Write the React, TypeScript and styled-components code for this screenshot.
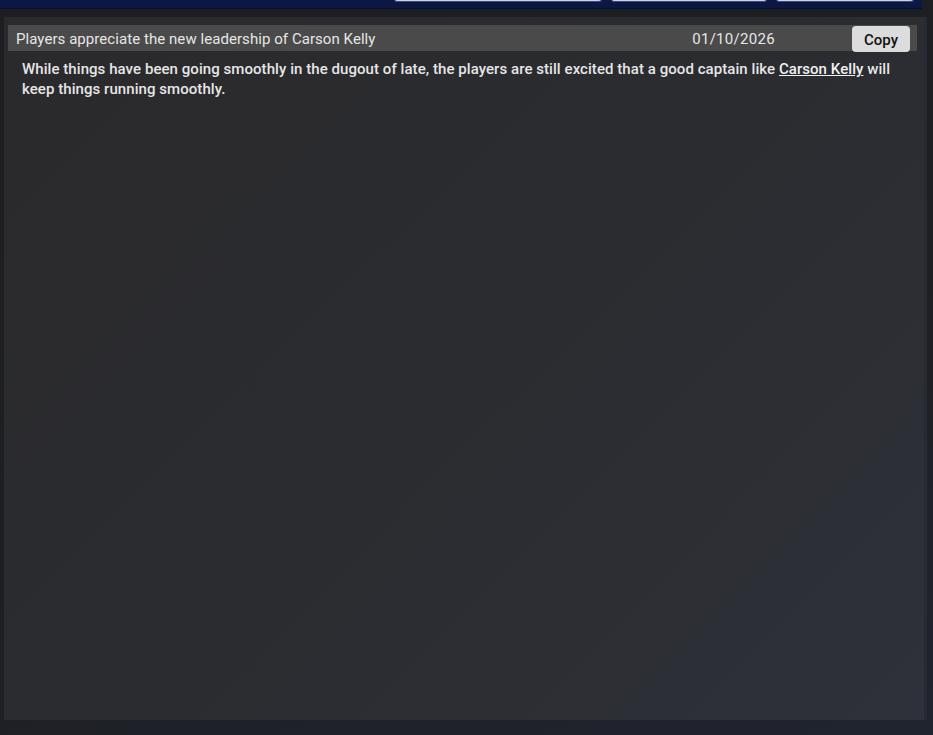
import React from 'react';
import styled, { createGlobalStyle } from 'styled-components';

const GlobalStyle = createGlobalStyle`
    body {
        margin: 0;
        font-family: Roboto, "Liberation Sans", sans-serif;
        background: #1c1d20;
    }
`;

const Page = styled.div`
    width: 933px;
    height: 735px;
    display: flex;
    flex-direction: column;
    overflow: hidden;
    background: linear-gradient(160deg, #1d1e21 0%, #1e1f23 55%, #20242f 100%);
`;

const TopBar = styled.div`
    width: 922px;
    height: 9px;
    flex-shrink: 0;
    display: flex;
    justify-content: flex-end;
    align-items: flex-end;
    gap: 9px;
    padding-right: 8px;
    box-sizing: border-box;
    overflow: hidden;
    background: #0b1844;
    border-bottom: 1px solid #071036;
`;

const Tab = styled.div<{ $w: number }>`
    width: ${(p) => p.$w}px;
    height: 30px;
    margin-bottom: 6px;
    flex-shrink: 0;
    box-sizing: border-box;
    background: #cfd3dd;
    border: 1px solid #3a4a7a;
    border-radius: 3px;
`;

const Main = styled.div`
    flex: 1;
    display: flex;
    padding: 8px 9px 15px 4px;
`;

const Panel = styled.div`
    flex: 1;
    padding: 8px 7px 0 4px;
    background: linear-gradient(135deg, #2a2a2c 0%, #2b2c30 50%, #2e3139 100%);
    box-shadow: 3px 0 0 #262a33;
`;

const HeaderRow = styled.div`
    height: 26px;
    box-sizing: border-box;
    display: flex;
    align-items: center;
    padding: 2px 7px 0 8px;
    background: #4a4a4a;
    color: #e6e6e6;
    font-size: 15px;
    letter-spacing: 0.06px;
`;

const Title = styled.div`
    flex: 1;
`;

const DateText = styled.div`
    margin-right: 77px;
    letter-spacing: 0.3px;
`;

const CopyButton = styled.button`
    align-self: flex-start;
    margin-top: -1px;
    width: 58px;
    height: 26px;
    padding: 2px 0 0;
    border: none;
    border-radius: 4px;
    background: #dcdcdc;
    color: #111;
    font-family: Roboto, "Liberation Sans", sans-serif;
    font-size: 15px;
    font-weight: 500;
`;

const Body = styled.p`
    margin: 8px 0 0;
    padding: 0 20px 0 14px;
    color: #e6e6e6;
    font-size: 15px;
    font-weight: 500;
    line-height: 20px;
    letter-spacing: 0.06px;
`;

const PlayerLink = styled.a`
    color: #f0f0f0;
    text-decoration: underline;
`;

const App = () => {
    return (
        <>
            <GlobalStyle />
            <Page>
                <TopBar>
                    <Tab $w={208} />
                    <Tab $w={156} />
                    <Tab $w={138} />
                </TopBar>
                <Main>
                    <Panel>
                        <HeaderRow>
                            <Title>Players appreciate the new leadership of Carson Kelly</Title>
                            <DateText>01/10/2026</DateText>
                            <CopyButton>Copy</CopyButton>
                        </HeaderRow>
                        <Body>
                            While things have been going smoothly in the dugout of late, the players are still excited that a good captain like{' '}
                            <PlayerLink>Carson Kelly</PlayerLink> will keep things running smoothly.
                        </Body>
                    </Panel>
                </Main>
            </Page>
        </>
    );
};

export default App;
